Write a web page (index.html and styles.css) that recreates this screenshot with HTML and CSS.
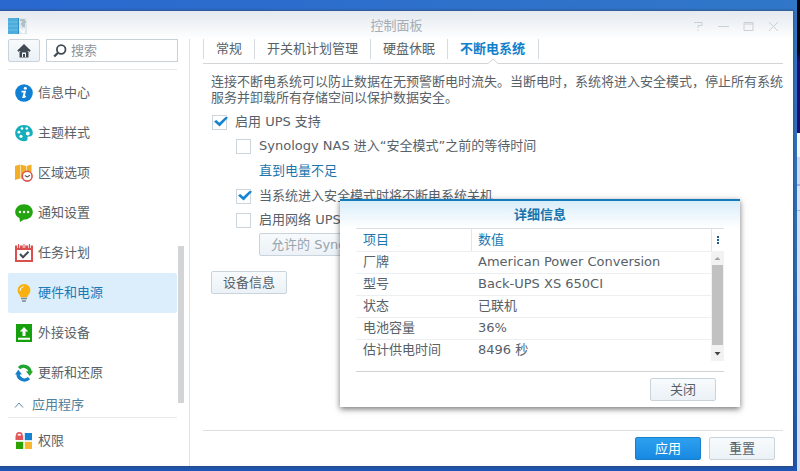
FILE: index.html
```html
<!DOCTYPE html>
<html lang="zh-CN">
<head>
<meta charset="utf-8">
<title>控制面板</title>
<link rel="stylesheet" href="styles.css">
</head>
<body>
<div class="desktop">
  <div class="window">
    <header class="titlebar">
      <svg class="app-icon" width="20" height="18" viewBox="0 0 20 18" aria-hidden="true">
        <rect x="10" y="1" width="9" height="16" fill="#dfe6eb"/>
        <path d="M12 3h5M14 5h4M13 7h4M14 9h3" stroke="#8797a3" stroke-width="1.200"/>
        <path d="M12 12l3 4M16 12v4" stroke="#fff" stroke-width="1.500"/>
        <rect y="1" width="11" height="16" fill="#4dacdc"/>
        <path d="M0 5h11M0 9h11M0 13h11" stroke="#6fc0e8"/>
        <path d="M10.500 1v16" stroke="#2f8dc4"/>
      </svg>
      <h1 class="window-title">控制面板</h1>
      <div class="window-controls">
        <button class="control" type="button" aria-label="帮助"><svg width="11" height="11" viewBox="0 0 11 11"><path d="M1 1.500h8v3H5v2.500M5 8.500V10" /></svg></button>
        <button class="control" type="button" aria-label="最小化"><svg width="11" height="11" viewBox="0 0 11 11"><path d="M0 5.500h11"/></svg></button>
        <button class="control" type="button" aria-label="最大化"><svg width="11" height="11" viewBox="0 0 11 11"><path d="M1 1.500h9v8H1zM1 3h9"/></svg></button>
        <button class="control" type="button" aria-label="关闭窗口"><svg width="11" height="11" viewBox="0 0 11 11"><path d="M1 1l9 9M10 1l-9 9"/></svg></button>
      </div>
    </header>
    <div class="content">
      <aside class="sidebar">
        <div class="search-row">
          <button class="btn home" type="button" aria-label="主页">
            <svg width="14" height="14" viewBox="0 0 14 14"><path d="M7 1L1 7h12z" fill="#414b53"/><path d="M1 7.200L7 1.400l6 5.800" fill="none" stroke="#414b53" stroke-width="2"/><path d="M2.500 8L7 4l4.500 4v5.500h-9z" fill="#414b53"/><path d="M5 13V8.500h4V13z" fill="#f3f7fa"/><path d="M6 13v-3h2v3z" fill="#414b53"/></svg>
          </button>
          <label class="search">
            <svg width="14" height="14" viewBox="0 0 14 14" aria-hidden="true"><circle cx="8.200" cy="5.500" r="4.300" fill="none" stroke="#414b53" stroke-width="1.800"/><path d="M5.200 8.500L1.200 12.500" stroke="#414b53" stroke-width="2.400"/></svg>
            <input type="search" placeholder="搜索" aria-label="搜索">
          </label>
        </div>
        <nav class="nav">
          <h2 class="section section-first">系统</h2>
          <a class="item" href="#"><svg class="icon" viewBox="0 0 18 18"><circle cx="9" cy="9" r="8.800" fill="#0f80d4"/><circle cx="10.300" cy="4.300" r="1.500" fill="#fff"/><path d="M6.500 7.600h3.400L8.400 13c1 0 1.600-.4 2.200-1" fill="none" stroke="#fff" stroke-width="1.900"/></svg>信息中心</a>
          <a class="item" href="#"><svg class="icon" viewBox="0 0 18 18"><path d="M9 1C4 1 .2 4.500.2 9S4 17.200 9 17.200c2.500 0 4-.8 3.500-2.400-.5-1.700.2-2.300 1.700-2.300 2.400 0 3.600-1.500 3.600-3.500C17.800 4.500 14 1 9 1z" fill="#15aebb"/><g fill="#fff"><circle cx="7" cy="4.500" r="1.300"/><circle cx="11.800" cy="4.500" r="1.300"/><circle cx="3.900" cy="8.200" r="1.400"/><circle cx="6" cy="12.300" r="1.600"/><circle cx="12.800" cy="9.500" r="1.900"/></g></svg>主题样式</a>
          <a class="item" href="#"><svg class="icon" viewBox="0 0 18 18"><path d="M0 2l5-1.500v14L0 16zM5.600.5L11 2v14l-5.400-1.500zM11.600 2L16.500.5V8h-4.900z" fill="#f2ae24"/><circle cx="12.200" cy="12.200" r="4.900" fill="#fff" stroke="#d9534f" stroke-width="1.600"/><path d="M9.800 11.500l2.400 1.400 2.700-1.700" fill="none" stroke="#555" stroke-width="1.200"/></svg>区域选项</a>
          <a class="item" href="#"><svg class="icon" viewBox="0 0 18 18"><path d="M9 .2C4 .2.2 3.700.2 7.900c0 2.600 1.500 4.900 4.200 6.200L5 18l4-2.400c5 0 8.800-3.500 8.800-7.700S14 .2 9 .2z" fill="#22a50f"/><g fill="#fff"><circle cx="4.900" cy="8" r="1.200"/><circle cx="9" cy="8" r="1.200"/><circle cx="13.100" cy="8" r="1.200"/></g></svg>通知设置</a>
          <a class="item" href="#"><svg class="icon" viewBox="0 0 18 18"><path d="M0 1.500h18V18H0z" fill="#d9504e"/><path d="M2 6h14v10H2z" fill="#fff"/><path d="M3.500 0v4M9 0v4M14.500 0v4" stroke="#fff" stroke-width="2.400"/><path d="M3.500 0v4M9 0v4M14.500 0v4" stroke="#d9504e" stroke-width="1"/><path d="M5 10l3 3.200 5.500-5.500" fill="none" stroke="#444c52" stroke-width="2"/></svg>任务计划</a>
          <a class="item selected" href="#"><svg class="icon" viewBox="0 0 18 18"><path d="M9 0a6.400 6.400 0 0 0-6.400 6.400c0 3 2.400 4 2.900 6.800h7c.5-2.800 2.900-3.800 2.900-6.800A6.400 6.400 0 0 0 9 0z" fill="#f9b110"/><path d="M5 7a4.500 4.500 0 0 1 3.500-4.500" stroke="#fff" fill="none"/><path d="M6 14.500h6M7 17h4" stroke="#7c8890" stroke-width="1.500"/></svg>硬件和电源</a>
          <a class="item" href="#"><svg class="icon" viewBox="0 0 18 18"><path d="M1 0h16v18H1z" fill="#16a00c"/><path d="M9 3l4.200 4.500h-2.700V12h-3V7.500H4.800zM3 13.800h12v2H3z" fill="#fff"/></svg>外接设备</a>
          <a class="item" href="#"><svg class="icon" viewBox="0 0 18 18"><path d="M4 4.200A6.600 6.600 0 0 1 15.200 8" fill="none" stroke="#22a332" stroke-width="3.200"/><path d="M11 7.200h7l-3.300 4.800z" fill="#22a332"/><path d="M14 14.200A6.600 6.600 0 0 1 2.900 10" fill="none" stroke="#167fca" stroke-width="3.200"/><path d="M0 10.500h7L3.300 5.800z" fill="#167fca"/></svg>更新和还原</a>
          <h2 class="section"><svg class="chevron" width="10" height="8" viewBox="0 0 10 8" aria-hidden="true"><path d="M1 6.500l4-4.500 4 4.500"/></svg>应用程序</h2>
          <a class="item" href="#"><svg class="icon" viewBox="0 0 18 18"><path d="M.5 3.500h7.700V8H.5z" fill="#e2575b"/><path d="M1.800 4V3Q1.800.9 4.300.9T6.800 3v1" fill="none" stroke="#e2575b" stroke-width="1.600"/><path d="M9.800 1h7.200v7.200H9.800z" fill="#1682cf"/><path d="M1 9.800h7.200V17H1z" fill="#2ca300"/><path d="M9.800 9.800h7.200V17H9.800z" fill="#fbb72b"/></svg>权限</a>
          <div class="nav-scroll"></div>
        </nav>
      </aside>
      <main class="main">
        <nav class="tabs">
          <a class="tab" href="#">常规</a>
          <a class="tab" href="#">开关机计划管理</a>
          <a class="tab" href="#">硬盘休眠</a>
          <a class="tab active" href="#">不断电系统<svg class="notch" width="12" height="6" viewBox="0 0 12 6" aria-hidden="true"><path d="M0 5.500h1L6 1l5 4.500h1V6H0z" fill="#fff"/><path d="M0 5.500h1L6 1l5 4.500h1" fill="none" stroke="#d2d6d9"/></svg></a>
        </nav>
        <form class="form">
          <p class="intro">连接不断电系统可以防止数据在无预警断电时流失。当断电时，系统将进入安全模式，停止所有系统服务并卸载所有存储空间以保护数据安全。</p>
          <label class="check"><input type="checkbox" checked><span>启用 UPS 支持</span></label>
          <div class="nested">
            <label class="check"><input type="checkbox"><span>Synology NAS 进入“安全模式”之前的等待时间</span></label>
            <a class="link" href="#">直到电量不足</a>
            <label class="check"><input type="checkbox" checked><span>当系统进入安全模式时将不断电系统关机</span></label>
            <label class="check"><input type="checkbox"><span>启用网络 UPS</span></label>
            <button class="btn allowed" type="button" disabled>允许的 Synology</button>
          </div>
          <button class="btn device" type="button">设备信息</button>
        </form>
        <footer class="footer">
          <button class="btn primary" type="button">应用</button>
          <button class="btn action" type="button">重置</button>
        </footer>
      </main>
    </div>
    <section class="dialog" role="dialog" aria-labelledby="dialog-title">
      <h2 class="dialog-title" id="dialog-title">详细信息</h2>
      <div class="grid">
        <table class="details">
          <thead><tr><th scope="col">项目</th><th scope="col">数值</th></tr></thead>
          <tbody>
            <tr><td>厂牌</td><td>American Power Conversion</td></tr>
            <tr><td>型号</td><td>Back-UPS XS 650CI</td></tr>
            <tr><td>状态</td><td>已联机</td></tr>
            <tr><td>电池容量</td><td>36%</td></tr>
            <tr><td>估计供电时间</td><td>8496 秒</td></tr>
          </tbody>
        </table>
        <div class="rail">
          <button class="columns" type="button" aria-label="列选项"><svg width="2" height="8" viewBox="0 0 2 8"><path d="M0 0h2v2H0zM0 3h2v2H0zM0 6h2v2H0z" fill="#1f5c8c"/></svg></button>
          <div class="scrollbar">
            <svg width="13" height="14" viewBox="0 0 13 14"><path d="M3.500 9h6l-3-3z" fill="#a3a3a3"/></svg>
            <div class="thumb"></div>
            <svg width="13" height="16" viewBox="0 0 13 16"><path d="M3.500 7h6l-3 3.500z" fill="#444"/></svg>
          </div>
        </div>
      </div>
      <div class="dialog-footer"><button class="btn action" type="button">关闭</button></div>
    </section>
  </div>
</div>
</body>
</html>
```
FILE: styles.css
```css
* { box-sizing: border-box; }

body {
  margin: 0;
  color: #586168;
  font: 13px/16px "DejaVu Sans", "Noto Sans CJK SC", sans-serif;
}

button, input { font: inherit; color: inherit; }
h1, h2, p { margin: 0; font-size: 13px; font-weight: normal; }
a { color: inherit; text-decoration: none; }
svg { flex: none; }

.desktop {
  display: flex;
  min-height: 100vh;
  padding: 11px 7px 5px 0;
  background:
    linear-gradient(#05050c 0 52px, #1c0d70 62px 133px, #f4f6fb 133px 157px, #cdd9ef 157px 184px, #9db4d8 184px 186px, #d9e3f4 186px 210px, #9db4d8 210px 211px, #d3dff2 211px) right / 3px 100% no-repeat,
    linear-gradient(90deg, #2a68cf, #3077c8) top / 100% 11px no-repeat,
    linear-gradient(#3077c8, #2c6db8 50%, #1e55b0);
}

.window {
  position: relative;
  flex: 1;
  display: flex;
  flex-direction: column;
  background: #fff;
  box-shadow: 0 0 2px 1px rgba(50, 60, 80, .5);
}

.titlebar {
  display: grid;
  grid-template-columns: 1fr auto 1fr;
  align-items: center;
  height: 28px;
  padding: 2px 8px 0;
  background: linear-gradient(#e3e9ef, #fff);
}
.window-title { color: #a5adb5; }
.window-controls { display: flex; justify-content: flex-end; gap: 14px; padding-right: 6px; }
.control { display: flex; padding: 0; border: 0; background: none; }
.control path { fill: none; stroke: #cbd0d4; stroke-width: 1; }

.content { flex: 1; display: flex; }

.sidebar {
  display: flex;
  flex-direction: column;
  width: 190px;
  border-right: 1px solid #dfe3e6;
}
.search-row { display: flex; gap: 6px; padding: 0 11px 0 8px; }
.btn {
  height: 23px;
  padding: 0 11px;
  border: 1px solid #c8d3dc;
  border-radius: 2px;
  background: linear-gradient(#f8fbfd, #ebf1f6);
  line-height: 21px;
  white-space: nowrap;
}
.home { display: flex; align-items: center; justify-content: center; width: 32px; padding: 0; }
.search {
  flex: 1;
  display: flex;
  align-items: center;
  gap: 4px;
  min-width: 0;
  height: 23px;
  padding: 0 6px;
  border: 1px solid #c8d0d8;
}
.search input { min-width: 0; flex: 1; padding: 0; border: 0; outline: 0; background: none; appearance: none; }
.search input::placeholder { color: #8f979e; opacity: 1; }

.nav { position: relative; flex: 1; padding: 0 12px 0 8px; overflow: hidden; }
.section {
  display: flex;
  align-items: center;
  gap: 8px;
  height: 25px;
  margin-bottom: 3px;
  padding-left: 6px;
  border-bottom: 1px solid #e6eaed;
  color: #50809b;
}
.section-first { margin-top: -17px; padding-left: 24px; color: #8ba3b3; line-height: 14px; align-items: flex-start; padding-top: 3px; }
.chevron path { fill: none; stroke: #6688a0; stroke-width: 1; }
.item { display: flex; align-items: center; gap: 5px; height: 40px; padding-left: 7px; border-radius: 2px; }
.icon { width: 18px; height: 18px; }
.selected { background: #dceefc; color: #1a7ab8; }
.nav-scroll { position: absolute; top: 184px; right: 5px; width: 6px; height: 157px; background: #d2d4d5; }

.main { flex: 1; display: flex; flex-direction: column; min-width: 0; padding: 0 10px 0 13px; }
.tabs { display: flex; height: 25px; border-bottom: 1px solid #d2d6d9; }
.tab { position: relative; height: 20px; padding: 0 12px 0 13px; line-height: 20px; box-shadow: inset 1px 0 #d6dbdf; }
.active { padding: 0 13px; border-right: 1px solid #d6dbdf; color: #1180cc; font-weight: bold; }
.notch { position: absolute; left: 50%; margin-left: -6px; bottom: -5px; }

.form { display: flex; flex-direction: column; align-items: flex-start; padding: 10px 0 0 8px; }
.intro { margin-bottom: 4px; }
.check { display: flex; align-items: center; gap: 8px; height: 24px; }
.check input {
  appearance: none;
  position: relative;
  width: 15px;
  height: 15px;
  margin: 0 0 0 1px;
  border: 1px solid #cdd5dc;
  background: #fff;
}
.check input:checked::after {
  content: "";
  position: absolute;
  inset: 1px -2px 2px 1px;
  background: #1284d2;
  clip-path: polygon(0 50%, 16% 36%, 38% 62%, 86% 0, 100% 12%, 40% 100%);
}
.nested { display: flex; flex-direction: column; align-items: flex-start; padding-left: 24px; }
.link { margin-left: 24px; height: 26px; line-height: 26px; color: #1a76ad; }
.allowed { margin: 1px 0 0 24px; color: #9aa4ac; }
.device { margin-top: 15px; }

.footer {
  display: flex;
  justify-content: flex-end;
  gap: 8px;
  margin-top: auto;
  padding: 6px 8px;
  height: 36px;
  border-top: 1px solid #dcdfe1;
}
.action, .primary { width: 66px; padding: 0; }
.primary { border-color: #1a80cc; background: linear-gradient(#2ea0ef, #1889e2); color: #fff; }

.dialog {
  position: absolute;
  top: 188px;
  left: 340px;
  width: 400px;
  padding: 0 16px;
  border-top: 2px solid #147ab8;
  background: linear-gradient(#d8edfa, #fff 27px);
  box-shadow: 0 2px 6px rgba(0, 0, 0, .55);
}
.dialog-title { height: 27px; line-height: 27px; text-align: center; color: #1874ad; font-weight: bold; }
.grid { display: flex; padding-bottom: 10px; border-top: 1px solid #d9dfe3; border-bottom: 1px solid #d0d4d7; }
.details { flex: 1; border-collapse: collapse; table-layout: fixed; }
.details th, .details td { height: 22px; padding: 0 7px; border-bottom: 1px solid #ebeff2; text-align: left; line-height: 20px; }
.details th { color: #1a76ad; font-weight: normal; }
.details th:first-child { width: 115px; }
.details th + th { box-shadow: inset 1px 0 #e0e6ea; }
.details tr:last-child td { border-bottom: 0; }
.rail { display: flex; flex-direction: column; width: 13px; }
.columns { display: flex; align-items: center; justify-content: center; height: 22px; padding: 0; border: 0; border-left: 1px solid #e0e6ea; background: none; }
.scrollbar { flex: 1; display: flex; flex-direction: column; background: #f2f2f2; }
.thumb { flex: 1; margin: 0 1px; background: #c1c1c1; }
.dialog-footer { display: flex; justify-content: flex-end; padding: 6px 8px; }
```
